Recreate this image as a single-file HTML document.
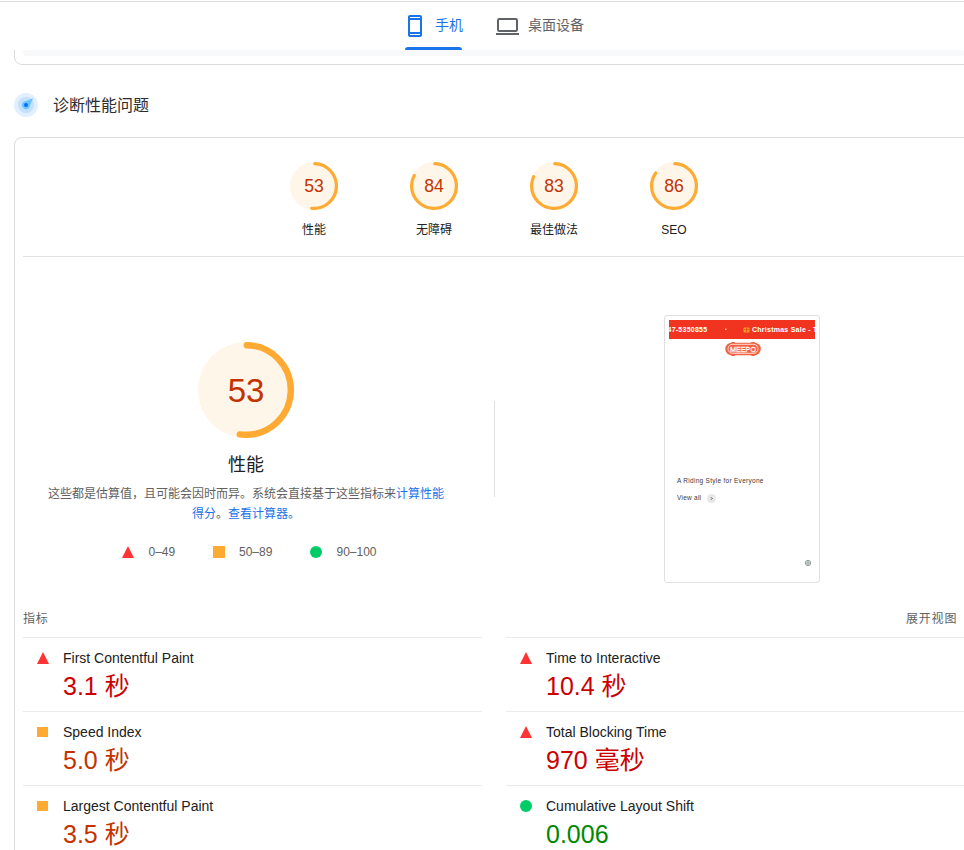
<!DOCTYPE html>
<html lang="zh-CN">
<head>
<meta charset="utf-8">
<title>PageSpeed Insights</title>
<style>
*{box-sizing:border-box;margin:0;padding:0}
html,body{width:964px;height:850px;overflow:hidden;background:#fff}
body{position:relative;font-family:"Liberation Sans","Noto Sans CJK SC",sans-serif;color:#202124;-webkit-font-smoothing:antialiased}
.abs{position:absolute}
.card{position:absolute;left:14px;width:960px;border:1px solid #dadce0;border-radius:8px;background:#fff}
#card1{top:-40px;height:105px}
#card1 .inner{position:absolute;left:8px;right:8px;top:0;height:95px;background:#f8f9fa;border-radius:0 0 4px 4px}
#topbar{position:absolute;left:0;top:0;width:964px;height:50px;background:#fff;z-index:5}
#topbar .ln{position:absolute;left:0;top:1px;width:964px;height:1px;background:#dadce0}
.tab{position:absolute;top:0;height:50px;font-size:14px;line-height:20px;white-space:nowrap}
.tab span{position:absolute;top:15px}
#tab1{color:#1a73e8}
#tab2{color:#5f6368}
#uline{position:absolute;left:405px;top:47px;width:57px;height:3px;background:#1a73e8;border-radius:3px 3px 0 0}
#sect{position:absolute;left:53px;top:94px;font-size:16px;line-height:24px;color:#2b2d30;white-space:nowrap}
#card2{top:137px;height:800px}
.hr{position:absolute;height:1px;background:#e0e0e0}
.hr.hl{background:#ebebeb}
.g48{position:absolute;top:162px;width:48px;height:48px}
.glabel{position:absolute;top:220px;width:120px;text-align:center;font-size:12px;line-height:20px;color:#212121;white-space:nowrap}
.gnum{position:absolute;top:162px;width:120px;height:48px;line-height:48px;text-align:center;font-size:17.6px;color:#c33300}
#bignum{position:absolute;left:146px;top:342px;width:200px;height:96px;line-height:97px;text-align:center;font-size:33px;color:#c33300}
#biglabel{position:absolute;left:146px;top:451px;width:200px;text-align:center;font-size:18px;line-height:28px;color:#212121}
#desc{position:absolute;left:26px;top:484px;width:440px;white-space:nowrap;text-align:center;font-size:12px;line-height:20px;color:#616161}
#desc a{color:#1a73e8;text-decoration:none}
.leg{position:absolute;top:544px;font-size:12px;line-height:16px;color:#616161;white-space:nowrap}
.tri{position:absolute;width:0;height:0;border-left:6px solid transparent;border-right:6px solid transparent;border-bottom:12px solid #f33}
.sq{position:absolute;width:12px;height:12px;background:#fa3}
.sqm{position:absolute;width:11px;height:10px;background:#fa3}
.dot{position:absolute;width:12px;height:12px;border-radius:50%;background:#0c6}
#vdiv{position:absolute;left:494px;top:401px;width:1px;height:96px;background:#e0e0e0}
#shot{position:absolute;left:664px;top:315px;width:156px;height:268px;border:1px solid #e0e0e0;border-radius:3px;background:#fff;overflow:hidden}
#shot .ban{position:absolute;left:4px;top:4px;width:146px;height:19px;background:#f0341f;overflow:hidden;color:#fff;font-weight:bold;font-size:7px;letter-spacing:.25px;line-height:19px;white-space:nowrap}
.mh{position:absolute;top:609px;font-size:12px;line-height:20px;color:#616161;white-space:nowrap}
.mt{position:absolute;font-size:14px;line-height:20px;color:#212121;white-space:nowrap}
.mv{position:absolute;font-size:25px;line-height:32px;white-space:nowrap}
.fail{color:#c00}.avg{color:#c33300}.pass{color:#080}
</style>
</head>
<body>

<div class="card" id="card1"><div class="inner"></div></div>

<div id="topbar"><div class="ln"></div>
  <div class="tab" id="tab1">
    <svg class="abs" style="left:403px;top:14px" width="24" height="24" viewBox="0 0 24 24"><path fill="#1a73e8" fill-rule="evenodd" d="M17 1.01L7 1c-1.1 0-2 .9-2 2v18c0 1.1.9 2 2 2h10c1.1 0 2-.9 2-2V3c0-1.1-.9-1.99-2-1.99zM17 21H7v-1h10v1zm0-3H7V6h10v12zM7 4V3h10v1H7z"/></svg>
    <span style="left:435px">手机</span>
  </div>
  <div class="tab" id="tab2">
    <svg class="abs" style="left:494px;top:14px" width="28" height="24" viewBox="494 14 28 24"><rect x="498" y="19" width="19" height="12" rx="1.200" fill="none" stroke="#5f6368" stroke-width="2"/><rect x="496" y="33" width="23" height="2" fill="#5f6368"/></svg>
    <span style="left:528px">桌面设备</span>
  </div>
  <div id="uline"></div>
</div>

<svg class="abs" style="left:14px;top:93px" width="24" height="24" viewBox="0 0 24 24">
  <circle cx="12" cy="12" r="12" fill="#e1efff"/>
  <circle cx="12" cy="12" r="8" fill="#c4e0ff"/>
  <path d="M19 5.200 L9.200 9.100 A4 4 0 1 0 15 14.900 Z" fill="#6ac5ff"/>
  <circle cx="12" cy="12" r="2" fill="#0a6cff"/>
</svg>
<div id="sect">诊断性能问题</div>

<div class="card" id="card2"></div>

<!-- small gauges -->
<svg class="g48" style="left:290px" viewBox="0 0 120 120"><circle cx="60" cy="60" r="60" fill="#fa3" fill-opacity=".1" stroke="none"/><circle cx="60" cy="60" r="56" fill="none" stroke="#fa3" stroke-width="8" stroke-linecap="round" stroke-dasharray="178.500 351.900" transform="rotate(-87.900 60 60)"/></svg>
<svg class="g48" style="left:410px" viewBox="0 0 120 120"><circle cx="60" cy="60" r="60" fill="#fa3" fill-opacity=".1" stroke="none"/><circle cx="60" cy="60" r="56" fill="none" stroke="#fa3" stroke-width="8" stroke-linecap="round" stroke-dasharray="287.600 351.900" transform="rotate(-87.900 60 60)"/></svg>
<svg class="g48" style="left:530px" viewBox="0 0 120 120"><circle cx="60" cy="60" r="60" fill="#fa3" fill-opacity=".1" stroke="none"/><circle cx="60" cy="60" r="56" fill="none" stroke="#fa3" stroke-width="8" stroke-linecap="round" stroke-dasharray="284.100 351.900" transform="rotate(-87.900 60 60)"/></svg>
<svg class="g48" style="left:650px" viewBox="0 0 120 120"><circle cx="60" cy="60" r="60" fill="#fa3" fill-opacity=".1" stroke="none"/><circle cx="60" cy="60" r="56" fill="none" stroke="#fa3" stroke-width="8" stroke-linecap="round" stroke-dasharray="294.600 351.900" transform="rotate(-87.900 60 60)"/></svg>
<div class="gnum" style="left:254px">53</div>
<div class="gnum" style="left:374px">84</div>
<div class="gnum" style="left:494px">83</div>
<div class="gnum" style="left:614px">86</div>
<div class="glabel" style="left:254px">性能</div>
<div class="glabel" style="left:374px">无障碍</div>
<div class="glabel" style="left:494px">最佳做法</div>
<div class="glabel" style="left:614px">SEO</div>

<div class="hr" style="left:23px;top:256px;width:941px"></div>

<!-- big gauge -->
<svg class="abs" style="left:198px;top:342px" width="96" height="96" viewBox="0 0 120 120"><circle cx="60" cy="60" r="60" fill="#fa3" fill-opacity=".1" stroke="none"/><circle cx="60" cy="60" r="56" fill="none" stroke="#fa3" stroke-width="8" stroke-linecap="round" stroke-dasharray="182.500 351.900" transform="rotate(-89 60 60)"/></svg>
<div id="bignum">53</div>
<div id="biglabel">性能</div>
<div id="desc">这些都是估算值，且可能会因时而异。系统会直接基于这些指标来<a>计算性能<br>得分</a>。<a>查看计算器。</a></div>

<div class="tri" style="left:122px;top:546px"></div>
<div class="leg" style="left:148.500px">0–49</div>
<div class="sq" style="left:213px;top:546px"></div>
<div class="leg" style="left:239px">50–89</div>
<div class="dot" style="left:310px;top:546px"></div>
<div class="leg" style="left:336.500px">90–100</div>

<div id="vdiv"></div>

<!-- screenshot thumbnail -->
<div id="shot">
  <div class="ban"><span class="abs" style="left:-1.500px">47-5350855</span><span class="abs" style="left:56px;font-size:5px;opacity:.9">•</span><span class="abs" style="left:83px">Christmas Sale - T</span>
    <svg class="abs" style="left:74px;top:6px" width="7" height="7" viewBox="0 0 7 7"><rect x="0.500" y="1.500" width="6" height="5" rx=".8" fill="#f59a23"/><rect x="3" y="1.500" width="1" height="5" fill="#e8541e"/><rect x=".5" y="3" width="6" height=".8" fill="#e8541e"/></svg>
  </div>
  <svg class="abs" style="left:58px;top:25.400px" width="40" height="16" viewBox="0 0 40 16">
    <rect x="2.300" y="1.800" width="35.500" height="12.400" rx="6.200" fill="#f1603f"/><rect x="8" y="1" width="4" height="14" rx="1" fill="#f1603f"/><rect x="28" y="1" width="4" height="14" rx="1" fill="#f1603f"/>
    <rect x="5" y="3.300" width="30" height="9" rx="4.500" fill="none" stroke="#fff" stroke-width=".8"/>
    <text x="20" y="11" text-anchor="middle" font-family="Liberation Sans,sans-serif" font-size="8" fill="#f0593a" stroke="#fff" stroke-width=".5" textLength="26" lengthAdjust="spacingAndGlyphs">MEEPO</text>
  </svg>
  <div class="abs" style="left:12px;top:160px;font-size:6.500px;letter-spacing:.28px;line-height:10px;color:#3a3a3a;white-space:nowrap">A Riding Style for Everyone</div>
  <div class="abs" style="left:12px;top:177px;font-size:6.500px;letter-spacing:.25px;line-height:10px;color:#3a3a3a;white-space:nowrap">View all</div>
  <div class="abs" style="left:41.500px;top:177.500px;width:9px;height:9px;border-radius:50%;background:#e8e8e8"></div>
  <svg class="abs" style="left:41.500px;top:177.500px" width="9" height="9" viewBox="0 0 9 9"><path d="M4 3.300L5.200 4.500 4 5.700" fill="none" stroke="#222" stroke-width=".8"/></svg>
  <svg class="abs" style="left:138.600px;top:242.600px" width="8" height="8" viewBox="0 0 8 8"><circle cx="4" cy="4" r="2.700" fill="#e6ecea" stroke="#7d8d89" stroke-width=".8"/><path d="M4 1.300v5.400M1.300 4h5.400" stroke="#7d8d89" stroke-width=".7"/></svg>
</div>

<!-- metrics -->
<div class="mh" style="left:23px;letter-spacing:.8px">指标</div>
<div class="mh" style="left:906px;letter-spacing:.8px">展开视图</div>

<div class="hr hl" style="left:23px;top:637px;width:459px"></div>
<div class="hr hl" style="left:506px;top:637px;width:458px"></div>
<div class="hr hl" style="left:23px;top:711px;width:459px"></div>
<div class="hr hl" style="left:506px;top:711px;width:458px"></div>
<div class="hr hl" style="left:23px;top:785px;width:459px"></div>
<div class="hr hl" style="left:506px;top:785px;width:458px"></div>

<div class="tri" style="left:37px;top:652px"></div>
<div class="mt" style="left:63px;top:648px">First Contentful Paint</div>
<div class="mv fail" style="left:63px;top:670px">3.1 秒</div>

<div class="sqm" style="left:37px;top:727px"></div>
<div class="mt" style="left:63px;top:722px">Speed Index</div>
<div class="mv avg" style="left:63px;top:744px">5.0 秒</div>

<div class="sqm" style="left:37px;top:801px"></div>
<div class="mt" style="left:63px;top:796px">Largest Contentful Paint</div>
<div class="mv avg" style="left:63px;top:818px">3.5 秒</div>

<div class="tri" style="left:520px;top:652px"></div>
<div class="mt" style="left:546px;top:648px">Time to Interactive</div>
<div class="mv fail" style="left:546px;top:670px">10.4 秒</div>

<div class="tri" style="left:520px;top:726px"></div>
<div class="mt" style="left:546px;top:722px">Total Blocking Time</div>
<div class="mv fail" style="left:546px;top:744px">970 毫秒</div>

<div class="dot" style="left:520px;top:800px"></div>
<div class="mt" style="left:546px;top:796px">Cumulative Layout Shift</div>
<div class="mv pass" style="left:546px;top:818px">0.006</div>

</body>
</html>
